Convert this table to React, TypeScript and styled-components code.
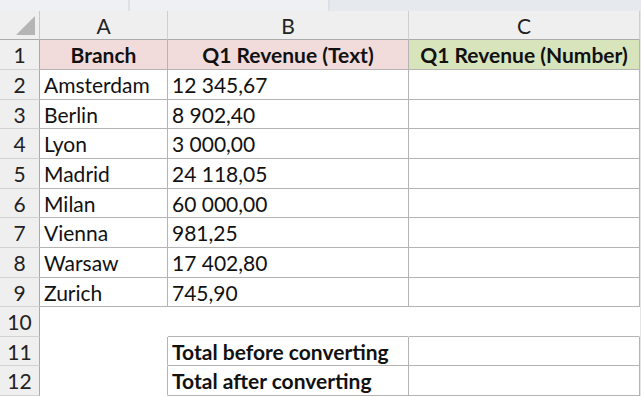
import styled, {createGlobalStyle} from 'styled-components'

const GlobalStyle = createGlobalStyle`
  html, body {
    margin: 0;
    padding: 0;
    background: #ffffff;
  }
  * {
    box-sizing: border-box;
  }
`

const Sheet = styled.div`
  width: 641px;
  height: 396px;
  overflow: hidden;
  font-family: Lato, "Open Sans", sans-serif;
  font-size: 21px;
  color: #111;
`

const TopStrip = styled.div`
  height: 11px;
  display: flex;
  background: #e8ebef;
`

const StripPart = styled.div<{$w?: string}>`
  width: ${p => p.$w || 'auto'};
  flex: ${p => (p.$w ? 'none' : '1')};
  border-right: 2px solid #dde1e6;
  background: #eef0f3;
  &:last-child {
    border-right: none;
    background: #e6e9ed;
  }
`

const Grid = styled.div`
  display: grid;
  grid-template-columns: 40px 128px 241px 231px 1fr;
  grid-template-rows: 29px 30px 30px 29px 30px 30px 29px 30px 30px 29px 30px 29px 30px;
`

const Corner = styled.div`
  position: relative;
  background: #efefef;
  border-right: 1px solid #c8c8c8;
  border-bottom: 1px solid #ababab;
  &::after {
    content: '';
    position: absolute;
    right: 4px;
    bottom: 4px;
    width: 0;
    height: 0;
    border-left: 19px solid transparent;
    border-bottom: 19px solid #b5b5b5;
  }
`

const ColHead = styled.div`
  display: flex;
  align-items: center;
  justify-content: center;
  background: #efefef;
  color: #222;
  border-right: 1px solid #cfcfcf;
  border-bottom: 1px solid #ababab;
`

const RowHead = styled.div`
  display: flex;
  align-items: center;
  justify-content: center;
  background: #efefef;
  color: #222;
  border-right: 1px solid #ababab;
  border-bottom: 1px solid #d2d2d2;
`

const Filler = styled.div`
  background: #e4e4e4;
`

const Cell = styled.div<{$r?: boolean; $b?: boolean; $bg?: string; $bold?: boolean; $center?: boolean}>`
  display: flex;
  align-items: center;
  justify-content: ${p => (p.$center ? 'center' : 'flex-start')};
  padding: 0 4px;
  white-space: nowrap;
  overflow: hidden;
  background: ${p => p.$bg || '#ffffff'};
  font-weight: ${p => (p.$bold ? 700 : 400)};
  border-right: 1px solid ${p => (p.$r ? '#b4b4b4' : 'transparent')};
  border-bottom: 1px solid ${p => (p.$b ? '#b4b4b4' : 'transparent')};
`

const rows: [string, string][] = [
  ['Amsterdam', '12 345,67'],
  ['Berlin', '8 902,40'],
  ['Lyon', '3 000,00'],
  ['Madrid', '24 118,05'],
  ['Milan', '60 000,00'],
  ['Vienna', '981,25'],
  ['Warsaw', '17 402,80'],
  ['Zurich', '745,90'],
]

const PINK = '#f2dcdb'
const GREEN = '#d8e4bc'

export default function App() {
  return (
    <Sheet>
      <GlobalStyle />
      <TopStrip>
        <StripPart $w="130px" />
        <StripPart $w="200px" />
        <StripPart />
      </TopStrip>
      <Grid>
        <Corner />
        <ColHead>A</ColHead>
        <ColHead>B</ColHead>
        <ColHead>C</ColHead>
        <Filler />

        <RowHead>1</RowHead>
        <Cell $r $b $bg={PINK} $bold $center>Branch</Cell>
        <Cell $r $b $bg={PINK} $bold $center>Q1 Revenue (Text)</Cell>
        <Cell $r $b $bg={GREEN} $bold $center>Q1 Revenue (Number)</Cell>
        <Filler />

        {rows.map(([branch, value], i) => (
          <Row key={branch} n={i + 2} branch={branch} value={value} />
        ))}

        <RowHead>10</RowHead>
        <Cell />
        <Cell $b />
        <Cell $b />
        <Filler />

        <RowHead>11</RowHead>
        <Cell $r />
        <Cell $r $b $bold>Total before converting</Cell>
        <Cell $r $b />
        <Filler />

        <RowHead>12</RowHead>
        <Cell $r />
        <Cell $r $b $bold>Total after converting</Cell>
        <Cell $r $b />
        <Filler />
      </Grid>
    </Sheet>
  )
}

const Row = ({n, branch, value}: {n: number; branch: string; value: string}) => (
  <>
    <RowHead>{n}</RowHead>
    <Cell $r $b>{branch}</Cell>
    <Cell $r $b>{value}</Cell>
    <Cell $r $b />
    <Filler />
  </>
)
